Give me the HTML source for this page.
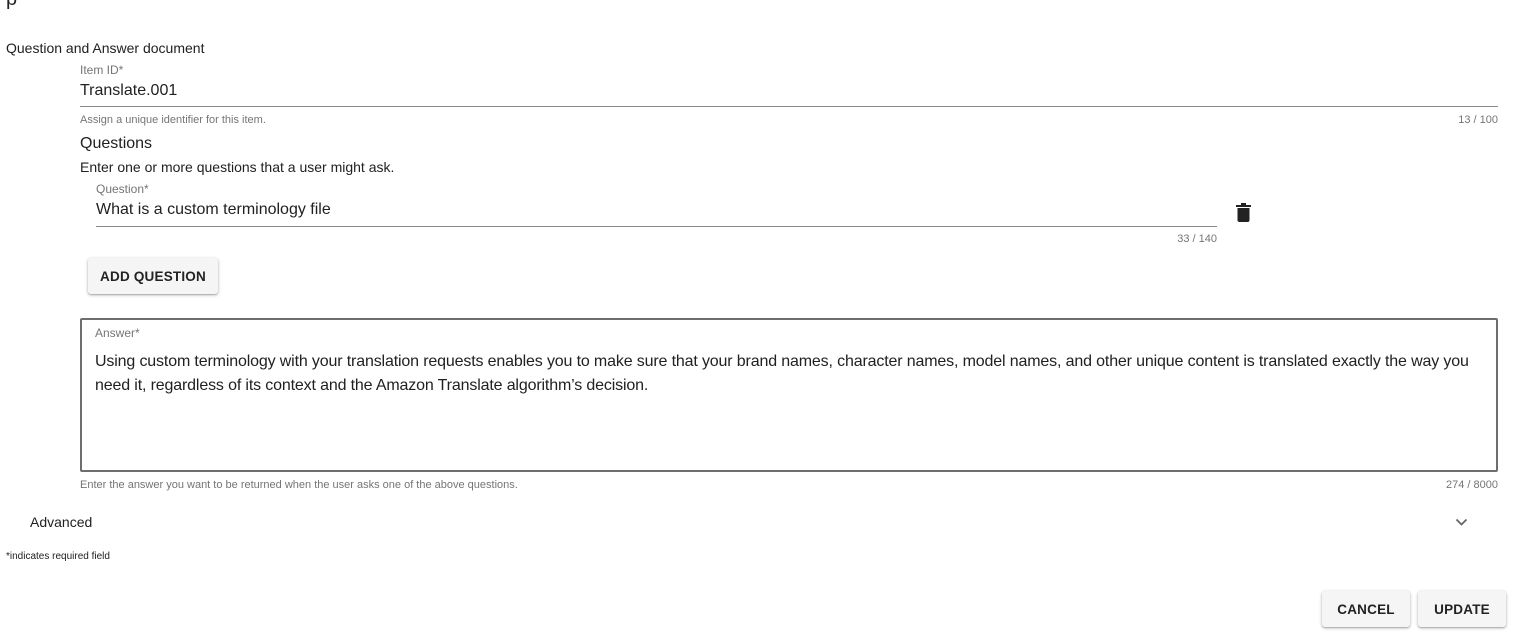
<!DOCTYPE html>
<html><head><style>
body{margin:0;width:1513px;height:635px;background:#fff;font-family:"Liberation Sans",Arial,sans-serif;color:#212121;position:relative;overflow:hidden}
.a{position:absolute;white-space:nowrap}
.btn{position:absolute;background:#f5f5f5;box-shadow:0 1px 3px rgba(0,0,0,.3),0 1px 1px rgba(0,0,0,.14);border-radius:3px;font-size:13.5px;font-weight:bold;letter-spacing:.2px;display:flex;align-items:center;justify-content:center;color:#222}
</style></head><body>
<div class="a" style="left:6px;top:-12px;font-size:20px">p</div>
<div class="a" style="left:6px;top:40px;font-size:14px">Question and Answer document</div>
<div class="a" style="left:80px;top:63px;font-size:12px;color:#757575">Item ID*</div>
<div class="a" style="left:80px;top:82px;font-size:16px">Translate.001</div>
<div class="a" style="left:80px;top:106px;width:1418px;height:1px;background:#8a8a8a"></div>
<div class="a" style="left:80px;top:114px;font-size:11px;color:#757575">Assign a unique identifier for this item.</div>
<div class="a" style="right:15px;top:114px;font-size:11px;color:#757575">13 / 100</div>
<div class="a" style="left:80px;top:135px;font-size:16px">Questions</div>
<div class="a" style="left:80px;top:159px;font-size:14px">Enter one or more questions that a user might ask.</div>
<div class="a" style="left:96px;top:182px;font-size:12px;color:#757575">Question*</div>
<div class="a" style="left:96px;top:201px;font-size:16px">What is a custom terminology file</div>
<div class="a" style="left:96px;top:226px;width:1121px;height:1px;background:#8a8a8a"></div>
<div class="a" style="right:296px;top:233px;font-size:11px;color:#757575">33 / 140</div>
<svg class="a" style="left:1236px;top:202px" width="15" height="20" viewBox="0 0 15 20"><rect x="0" y="3" width="15" height="2" fill="#222"/><rect x="5" y="1" width="5" height="2" fill="#222"/><path d="M1.5 6h12v12a2 2 0 0 1-2 2h-8a2 2 0 0 1-2-2z" fill="#222"/></svg>
<div class="btn" style="left:88px;top:258px;width:130px;height:36px">ADD QUESTION</div>
<div class="a" style="left:80px;top:318px;width:1414px;height:150px;border:2px solid #6e6e6e;border-radius:2px"></div>
<div class="a" style="left:95px;top:326px;font-size:12px;color:#757575">Answer*</div>
<div class="a" style="left:95px;top:350px;font-size:16px;line-height:24px;width:1402px;white-space:normal;letter-spacing:-0.15px">Using custom terminology with your translation requests enables you to make sure that your brand names, character names, model names, and other unique content is translated exactly the way you need it, regardless of its context and the Amazon Translate algorithm’s decision.</div>
<div class="a" style="left:80px;top:479px;font-size:11px;color:#757575">Enter the answer you want to be returned when the user asks one of the above questions.</div>
<div class="a" style="right:15px;top:479px;font-size:11px;color:#757575">274 / 8000</div>
<div class="a" style="left:30px;top:514px;font-size:14px">Advanced</div>
<svg class="a" style="left:1455px;top:518px" width="13" height="8" viewBox="0 0 13 8"><path d="M1.5 1.5l5 5 5-5" fill="none" stroke="#666" stroke-width="1.8"/></svg>
<div class="a" style="left:6px;top:551px;font-size:10px">*indicates required field</div>
<div class="btn" style="left:1322px;top:591px;width:88px;height:36px">CANCEL</div>
<div class="btn" style="left:1418px;top:591px;width:88px;height:36px">UPDATE</div>
</body></html>
